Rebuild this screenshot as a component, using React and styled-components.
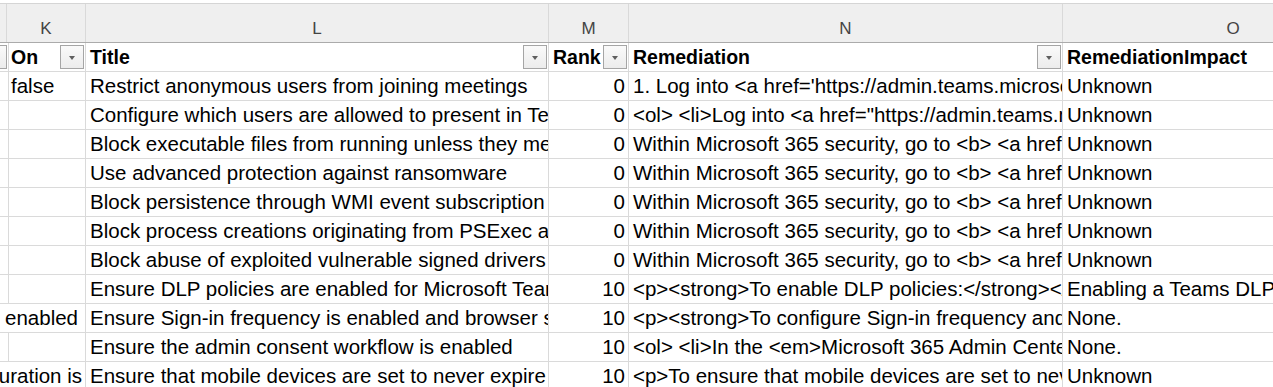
import React from 'react';
import styled, { createGlobalStyle } from 'styled-components';

const COLUMNS = '7px 79px 463px 80px 434px 341px';

const letters = ['', 'K', 'L', 'M', 'N', 'O'];

const headers = [
    { label: '', filter: true },
    { label: 'On', filter: true },
    { label: 'Title', filter: true },
    { label: 'Rank', filter: true },
    { label: 'Remediation', filter: true },
    { label: 'RemediationImpact', filter: false }
];

const rows = [
    {
        on: 'false',
        title: 'Restrict anonymous users from joining meetings',
        rank: 0,
        remediation: "1. Log into <a href='https://admin.teams.microsoft.com'>Microsoft Teams admin center</a>",
        impact: 'Unknown'
    },
    {
        title: 'Configure which users are allowed to present in Teams meetings',
        rank: 0,
        remediation: '<ol> <li>Log into <a href="https://admin.teams.microsoft.com">Microsoft Teams admin center</a>',
        impact: 'Unknown'
    },
    {
        title: 'Block executable files from running unless they meet a prevalence, age, or trusted list criterion',
        rank: 0,
        remediation: "Within Microsoft 365 security, go to <b> <a href='https://security.microsoft.com'>",
        impact: 'Unknown'
    },
    {
        title: 'Use advanced protection against ransomware',
        rank: 0,
        remediation: "Within Microsoft 365 security, go to <b> <a href='https://security.microsoft.com'>",
        impact: 'Unknown'
    },
    {
        title: 'Block persistence through WMI event subscription',
        rank: 0,
        remediation: "Within Microsoft 365 security, go to <b> <a href='https://security.microsoft.com'>",
        impact: 'Unknown'
    },
    {
        title: 'Block process creations originating from PSExec and WMI commands',
        rank: 0,
        remediation: "Within Microsoft 365 security, go to <b> <a href='https://security.microsoft.com'>",
        impact: 'Unknown'
    },
    {
        title: 'Block abuse of exploited vulnerable signed drivers',
        rank: 0,
        remediation: "Within Microsoft 365 security, go to <b> <a href='https://security.microsoft.com'>",
        impact: 'Unknown'
    },
    {
        title: 'Ensure DLP policies are enabled for Microsoft Teams',
        rank: 10,
        remediation: '<p><strong>To enable DLP policies:</strong></p> <ol> <li>Navigate to Microsoft Purview',
        impact: 'Enabling a Teams DLP policy will allow sensitive data in Teams channels to be protected'
    },
    {
        spill: 'Persistent browser session is enabled',
        tail: 7,
        title: 'Ensure Sign-in frequency is enabled and browser sessions are not persistent for Administrative users',
        rank: 10,
        remediation: '<p><strong>To configure Sign-in frequency and browser sessions persistence:</strong></p>',
        impact: 'None.'
    },
    {
        title: 'Ensure the admin consent workflow is enabled',
        rank: 10,
        remediation: '<ol> <li>In the <em>Microsoft 365 Admin Center</em>, navigate to Azure Active Directory',
        impact: 'None.'
    },
    {
        spill: 'Password expiration configuration is',
        tail: 3,
        title: 'Ensure that mobile devices are set to never expire passwords',
        rank: 10,
        remediation: '<p>To ensure that mobile devices are set to never expire passwords:</p>',
        impact: 'Unknown'
    }
];

const App = () => {
    return (
        <Sheet>
            <GlobalStyle />
            <ColumnBar>
                {letters.map((l, i) => (
                    <ColLetter key={i}>{l}</ColLetter>
                ))}
            </ColumnBar>
            <Grid>
                {headers.map((h, i) => (
                    <HeadCell key={i}>
                        {h.label}
                        {h.filter && (
                            <FilterBtn>
                                <Arrow />
                            </FilterBtn>
                        )}
                    </HeadCell>
                ))}
                {rows.map((r, i) => (
                    <React.Fragment key={i}>
                        {r.spill ? (
                            <SpillCell $tail={r.tail}>
                                <span>{r.spill}</span>
                            </SpillCell>
                        ) : (
                            <>
                                <Cell />
                                <Cell>{r.on}</Cell>
                            </>
                        )}
                        <Cell>{r.title}</Cell>
                        <Cell $num>{r.rank}</Cell>
                        <Cell>{r.remediation}</Cell>
                        <Cell>{r.impact}</Cell>
                    </React.Fragment>
                ))}
            </Grid>
        </Sheet>
    );
};

const GlobalStyle = createGlobalStyle`
    html, body {
        margin: 0;
        padding: 0;
        background: #fff;
        overflow: hidden;
    }
    * {
        box-sizing: border-box;
    }
`;

const Sheet = styled.div`
    width: 1273px;
    height: 387px;
    overflow: hidden;
    padding-top: 3px;
    font-family: "Liberation Sans", Arial, sans-serif;
    color: #000;
`;

const ColumnBar = styled.div`
    display: grid;
    grid-template-columns: ${COLUMNS};
    height: 40px;
    background: #efefef;
    border-top: 1px solid #d5d5d5;
    border-bottom: 1px solid #ababab;
`;

const ColLetter = styled.div`
    display: flex;
    align-items: flex-end;
    justify-content: center;
    padding-bottom: 3px;
    border-right: 1px solid #d9d9d9;
    font-size: 17px;
    line-height: 20px;
    color: #444;
    overflow: hidden;
`;

const Grid = styled.div`
    display: grid;
    grid-template-columns: ${COLUMNS};
    grid-auto-rows: 29px;
`;

const Cell = styled.div`
    height: 29px;
    padding: 0 ${(p) => (p.$num ? '3px' : '4px')} 0 4px;
    border-right: 1px solid #dadada;
    border-bottom: 1px solid #dadada;
    font-size: 20.5px;
    line-height: 28px;
    white-space: nowrap;
    overflow: hidden;
    text-align: ${(p) => (p.$num ? 'right' : 'left')};
`;

const SpillCell = styled(Cell)`
    grid-column: span 2;
    display: flex;
    justify-content: flex-end;
    padding-right: ${(p) => p.$tail}px;
`;

const HeadCell = styled(Cell)`
    position: relative;
    font-weight: bold;
    font-size: 19.5px;
`;

const FilterBtn = styled.div`
    position: absolute;
    top: 2px;
    right: 1px;
    width: 24px;
    height: 24px;
    display: flex;
    align-items: center;
    justify-content: center;
    border: 1px solid #a5a5a5;
    background: linear-gradient(#fafafa, #ececec);
`;

const Arrow = styled.span`
    width: 0;
    height: 0;
    margin-top: 1px;
    border-left: 3.5px solid transparent;
    border-right: 3.5px solid transparent;
    border-top: 4px solid #5f5f5f;
`;

export default App;
